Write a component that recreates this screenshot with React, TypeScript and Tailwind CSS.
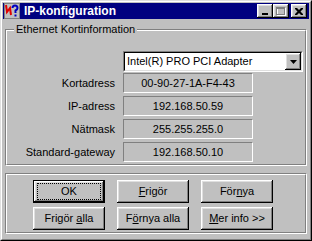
import type { ReactNode } from 'react'

const raised =
  'shadow-[inset_-1px_-1px_#000,inset_1px_1px_#fff,inset_-2px_-2px_#808080,inset_2px_2px_#dfdfdf]'

function TitleButton({ children, className = '' }: { children: ReactNode; className?: string }) {
  return (
    <div className={`flex h-[14px] w-[16px] items-center justify-center bg-[#c0c0c0] ${raised} ${className}`}>
      {children}
    </div>
  )
}

function AppIcon() {
  return (
    <svg width="16" height="16" viewBox="0 0 16 16">
      <rect x="0" y="0" width="16" height="16" fill="#c0c0c0" />
      <rect x="0.5" y="0.5" width="15" height="15" fill="none" stroke="#808080" />
      <polyline points="2,2 3,9 6,5 7,12" fill="none" stroke="#e00000" strokeWidth="2" />
      <path d="M8.5 5 Q8.5 2.5 11 2.5 Q13.5 2.5 13.5 5 Q13.5 6.5 11.5 7.5 L11.5 10" fill="none" stroke="#0000c0" strokeWidth="2" />
      <rect x="10.5" y="11.5" width="2" height="2" fill="#0000c0" />
    </svg>
  )
}

function TitleBar() {
  return (
    <div className="flex h-[16px] items-center bg-[#000080] pl-[1px] pr-[2px]">
      <AppIcon />
      <span className="ml-[4px] flex-1 text-[12px] font-bold leading-none text-white">IP-konfiguration</span>
      <TitleButton>
        <svg width="8" height="7" viewBox="0 0 8 7">
          <rect x="1" y="5" width="6" height="2" fill="#000" />
        </svg>
      </TitleButton>
      <TitleButton>
        <svg width="10" height="9" viewBox="0 0 10 9">
          <rect x="1.5" y="1.5" width="8" height="7" fill="none" stroke="#fff" />
          <rect x="1" y="1" width="8" height="1" fill="#fff" />
          <rect x="0.5" y="0.5" width="8" height="7" fill="none" stroke="#808080" />
          <rect x="0" y="0" width="9" height="2" fill="#808080" />
        </svg>
      </TitleButton>
      <TitleButton className="ml-[2px]">
        <svg width="8" height="7" viewBox="0 0 8 7">
          <path d="M0 0h2l2 2 2-2h2v1l-2.5 2.5L8 6v1H6L4 5 2 7H0V6l2.5-2.5L0 1z" fill="#000" />
        </svg>
      </TitleButton>
    </div>
  )
}

function Etched({ children, className = '' }: { children: ReactNode; className?: string }) {
  return (
    <div className={`relative mx-[2px] border border-t-[#808080] border-l-[#808080] border-r-white border-b-white ${className}`}>
      <div className="border border-t-white border-l-white border-r-[#808080] border-b-[#808080]">{children}</div>
    </div>
  )
}

function Field({ value }: { value: string }) {
  return (
    <div className="flex h-[20px] items-center justify-center border border-t-[#808080] border-l-[#808080] border-r-white border-b-white">
      {value}
    </div>
  )
}

function Button({ children, primary = false }: { children: ReactNode; primary?: boolean }) {
  if (primary) {
    return (
      <div className="flex h-[23px] border border-black">
        <div className={`flex flex-1 px-[3px] py-[2px] ${raised}`}>
          <div className="flex flex-1 items-center justify-center border border-dotted border-black leading-none">
            {children}
          </div>
        </div>
      </div>
    )
  }
  return <div className={`flex h-[23px] items-center justify-center leading-none ${raised}`}>{children}</div>
}

const rows = [
  ['Kortadress', '00-90-27-1A-F4-43'],
  ['IP-adress', '192.168.50.59'],
  ['Nätmask', '255.255.255.0'],
  ['Standard-gateway', '192.168.50.10'],
]

export default function App() {
  return (
    <div className="h-[241px] w-[312px] bg-[#c0c0c0] font-['Liberation_Sans',Arial,sans-serif] text-[11px] text-black">
      <div className="h-full border border-t-[#dfdfdf] border-l-[#dfdfdf] border-r-black border-b-black">
        <div className="flex h-full flex-col border border-t-white border-l-white border-r-[#808080] border-b-[#808080] p-px">
          <TitleBar />

          <Etched className="mt-[10px]">
            <span className="absolute left-[8px] top-[-7px] bg-[#c0c0c0] px-[2px] leading-[13px]">
              Ethernet Kortinformation
            </span>
            <div className="pb-[2px] pt-[20px]">
              <div className="ml-[116px] flex h-[21px] w-[180px] border border-t-[#808080] border-l-[#808080] border-r-white border-b-white">
                <div className="flex flex-1 items-center border border-t-black border-l-black border-r-[#dfdfdf] border-b-[#dfdfdf] bg-white">
                  <span className="flex-1 pl-[2px]">Intel(R) PRO PCI Adapter</span>
                  <div className={`flex h-full w-[16px] items-center justify-center bg-[#c0c0c0] ${raised}`}>
                    <svg width="7" height="4" viewBox="0 0 7 4">
                      <path d="M0 0h7L3.5 4z" fill="#000" />
                    </svg>
                  </div>
                </div>
              </div>
              <div className="mt-[1px] grid grid-cols-[108px_130px] gap-x-[8px] gap-y-[3px]">
                {rows.map(([label, value]) => (
                  <div key={label} className="contents">
                    <div className="flex h-[20px] items-center justify-end">{label}</div>
                    <Field value={value} />
                  </div>
                ))}
              </div>
            </div>
          </Etched>

          <Etched className="mt-[7px]">
            <div className="grid grid-cols-[72px_72px_72px] gap-x-[12px] gap-y-[4px] pb-[2px] pl-[26px] pt-[5px]">
              <Button primary>OK</Button>
              <Button>
                <span><u>F</u>rigör</span>
              </Button>
              <Button>
                <span>För<u>n</u>ya</span>
              </Button>
              <Button>
                <span>Frigör <u>a</u>lla</span>
              </Button>
              <Button>
                <span>F<u>ö</u>rnya alla</span>
              </Button>
              <Button>
                <span><u>M</u>er info &gt;&gt;</span>
              </Button>
            </div>
          </Etched>
        </div>
      </div>
    </div>
  )
}
